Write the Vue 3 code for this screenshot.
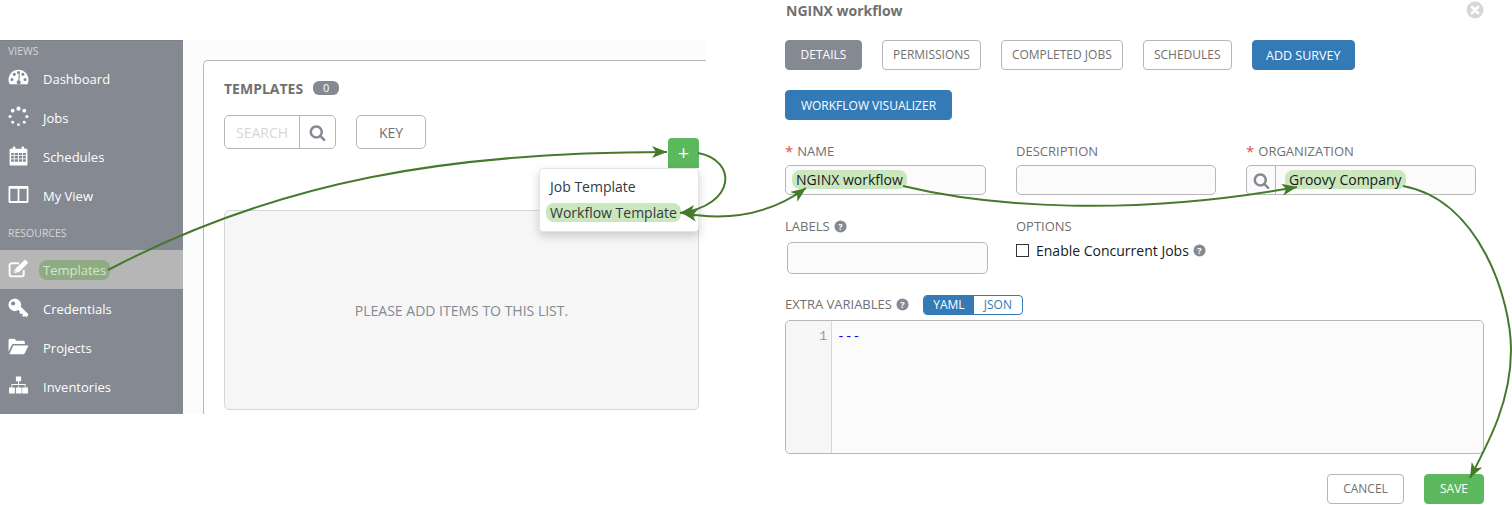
<template>
  <div class="page">
    <div class="left">
      <nav class="sidebar">
        <div class="section first">VIEWS</div>
        <a v-for="item in views" :key="item.label" class="nav-row">
          <svg class="nav-icon" viewBox="0 0 20 20" v-html="item.icon"></svg>
          <span>{{ item.label }}</span>
        </a>
        <div class="section">RESOURCES</div>
        <a v-for="item in resources" :key="item.label" :class="['nav-row', { active: item.active }]">
          <svg class="nav-icon" viewBox="0 0 20 20" v-html="item.icon"></svg>
          <span :class="{ 'mark-dark': item.active }">{{ item.label }}</span>
        </a>
      </nav>

      <main class="main">
        <section class="card">
          <div class="card-title">
            <span>TEMPLATES</span>
            <span class="badge">0</span>
          </div>
          <div class="tools">
            <div class="search">
              <span class="search-text">SEARCH</span>
              <span class="search-btn">
                <svg class="search-icon" viewBox="0 0 1792 1792"><path :d="searchPath" /></svg>
              </span>
            </div>
            <button class="key-btn">KEY</button>
          </div>
          <div class="add-wrap">
            <button class="add-btn">+</button>
            <div class="menu">
              <div class="menu-item">Job Template</div>
              <div class="menu-item"><span class="mark">Workflow Template</span></div>
            </div>
          </div>
          <div class="empty">PLEASE ADD ITEMS TO THIS LIST.</div>
        </section>
      </main>
    </div>

    <section class="form">
      <header class="form-head">
        <span class="form-title">NGINX workflow</span>
        <svg class="close" viewBox="0 0 18 18">
          <circle cx="9" cy="9" r="8.5" fill="#d7d7d7" />
          <path d="M6 6l6 6M12 6l-6 6" stroke="#fff" stroke-width="2.8" stroke-linecap="round" />
        </svg>
      </header>

      <div class="tabs">
        <button class="tab selected">DETAILS</button>
        <button class="tab">PERMISSIONS</button>
        <button class="tab">COMPLETED JOBS</button>
        <button class="tab sched">SCHEDULES</button>
        <button class="tab blue survey">ADD SURVEY</button>
      </div>
      <button class="tab blue visual">WORKFLOW VISUALIZER</button>

      <div class="fields">
        <div class="field">
          <label><i>*</i> NAME</label>
          <div class="input"><span class="mark">NGINX workflow</span></div>
        </div>
        <div class="field">
          <label>DESCRIPTION</label>
          <div class="input"></div>
        </div>
        <div class="field">
          <label><i>*</i> ORGANIZATION</label>
          <div class="input org">
            <span class="org-btn">
              <svg class="search-icon" viewBox="0 0 1792 1792"><path :d="searchPath" /></svg>
            </span>
            <span class="org-value"><span class="mark">Groovy Company</span></span>
          </div>
        </div>
        <div class="field">
          <label>LABELS <svg class="help" viewBox="0 0 14 14"><circle cx="7" cy="7" r="6.5" /><text x="7" y="10.500">?</text></svg></label>
          <div class="input labels"></div>
        </div>
        <div class="field">
          <label>OPTIONS</label>
          <div class="check-row">
            <span class="check"></span>
            <span>Enable Concurrent Jobs</span>
            <svg class="help" viewBox="0 0 14 14"><circle cx="7" cy="7" r="6.5" /><text x="7" y="10.500">?</text></svg>
          </div>
        </div>
      </div>

      <div class="vars-head">
        <label>EXTRA VARIABLES <svg class="help" viewBox="0 0 14 14"><circle cx="7" cy="7" r="6.5" /><text x="7" y="10.500">?</text></svg></label>
        <div class="toggle">
          <span class="on">YAML</span>
          <span>JSON</span>
        </div>
      </div>
      <div class="code">
        <div class="gutter">1</div>
        <div class="code-text">---</div>
      </div>

      <div class="actions">
        <button class="tab cancel">CANCEL</button>
        <button class="tab save">SAVE</button>
      </div>
    </section>

    <!-- annotation arrows lie over everything -->
    <svg class="arrows" width="1512" height="505" viewBox="0 0 1512 505">
      <defs>
        <marker id="head" markerUnits="userSpaceOnUse" markerWidth="20" markerHeight="14" refX="15" refY="6" orient="auto">
          <path d="M0 0L15 6L0 12L4 6Z" fill="#457a2c" />
        </marker>
        <marker id="head-start" markerUnits="userSpaceOnUse" markerWidth="20" markerHeight="14" refX="0" refY="6" orient="auto">
          <path d="M0 6L15 0L11 6L15 12Z" fill="#457a2c" />
        </marker>
      </defs>
      <g fill="none" stroke="#457a2c" stroke-width="2">
        <path d="M108 270C280 180 450 152 667 152" marker-end="url(#head)" />
        <path d="M698 153C737 160 737 205 680 213" marker-end="url(#head)" />
        <path d="M682 213C720 220 765 218 806 188" marker-start="url(#head-start)" marker-end="url(#head)" />
        <path d="M903 186C990 207 1130 217 1297 187" marker-end="url(#head)" />
        <path d="M1403 186C1480 200 1511 300 1511 350C1511 400 1490 440 1470 478" marker-end="url(#head)" />
      </g>
    </svg>
  </div>
</template>

<script setup>
const searchPath = 'M1216 832q0-185-131.500-316.500t-316.500-131.500-316.500 131.500-131.500 316.500 131.500 316.500 316.500 131.500 316.500-131.500 131.500-316.500zm512 832q0 52-38 90t-90 38q-54 0-90-38l-343-342q-179 124-399 124-143 0-273.500-55.500t-225-150-150-225-55.500-273.500 55.500-273.500 150-225 225-150 273.500-55.500 273.500 55.500 225 150 150 225 55.500 273.500q0 220-124 399l343 343q37 37 37 90z'

const dots = [[10, 2.500, 2], [15.500, 4.500, 1.800], [18, 10, 1.500], [15.500, 15.500, 1.400], [10, 17.800, 1.300], [4.500, 15.500, 1.400], [2, 10, 1.500], [4.500, 4.500, 1.800]]

const views = [
  {
    label: 'Dashboard',
    icon: '<path fill="#fff" fill-rule="evenodd" d="M10 2.500C4.500 2.500.5 7 .5 12.300c0 1.600.3 3 1 4.200h17c.7-1.200 1-2.600 1-4.200C19.500 7 15.500 2.500 10 2.500zM3.800 13.400a1.500 1.500 0 1 1 0-3 1.500 1.500 0 0 1 0 3zM6 8.500a1.500 1.500 0 1 1 0-3 1.500 1.500 0 0 1 0 3zM10 6.800a1.500 1.500 0 1 1 0-3 1.500 1.500 0 0 1 0 3zM14.200 8.500a1.500 1.500 0 1 1 0-3 1.500 1.500 0 0 1 0 3zM16.200 13.400a1.500 1.500 0 1 1 0-3 1.500 1.500 0 0 1 0 3z"/><path fill="#848992" d="M11.500 7l-.7 5.600a2 2 0 1 1-2.600 1.900c0-1 .7-1.800 1.600-2l.6-5.500z"/>'
  },
  {
    label: 'Jobs',
    icon: dots.map(([x, y, r]) => `<circle cx="${x}" cy="${y}" r="${r}" fill="#fff"/>`).join('')
  },
  {
    label: 'Schedules',
    icon: '<path fill="#fff" fill-rule="evenodd" d="M2.500 3.500h2V2.800a1.300 1.300 0 0 1 2.600 0v.7h5.800v-.7a1.300 1.300 0 0 1 2.600 0v.7h2c.6 0 1 .4 1 1v14c0 .6-.4 1-1 1h-15c-.6 0-1-.4-1-1v-14c0-.6.4-1 1-1zM3 7.500v2h2.500v-2zm3.300 0v2h3.200v-2zm4 0v2h3.200v-2zm4 0v2H17v-2zM3 10.300v2.500h2.500v-2.500zm3.300 0v2.500h3.200v-2.500zm4 0v2.500h3.200v-2.500zm4 0v2.500H17v-2.500zM3 13.600V16h2.500v-2.400zm3.300 0V16h3.200v-2.400zm4 0V16h3.200v-2.400zm4 0V16H17v-2.400z"/>'
  },
  {
    label: 'My View',
    icon: '<path fill="#fff" fill-rule="evenodd" d="M1.500 2h17c.6 0 1 .4 1 1v14c0 .6-.4 1-1 1h-17c-.6 0-1-.4-1-1V3c0-.6.4-1 1-1zM2.200 4.500v11.800h7V4.500zm8.600 0v11.800h7V4.500z"/>'
  }
]

const resources = [
  {
    label: 'Templates',
    active: true,
    icon: '<path fill="none" stroke="#fff" stroke-width="1.800" d="M15 11.500v4c0 1.200-.9 2-2 2H3.500c-1.100 0-2-.8-2-2V7c0-1.100.9-2 2-2h7"/><path fill="#fff" d="M16.300 1.500l3 3-9 9H7v-3.200zM6 11l-.2 3.200L9 14z"/>'
  },
  {
    label: 'Credentials',
    icon: '<path fill="#fff" fill-rule="evenodd" d="M6.500 1.500a6 6 0 0 1 5.700 7.900l7.300 7.100-1.600 2.800-1.900-1.200-.9 1-1.700-1.400.8-1.100-1-1-1 .8-1.400-1.500.6-.9-1.600-1.500A6 6 0 1 1 6.500 1.500zM4.900 4.200a2 2 0 1 0 0 4 2 2 0 0 0 0-4z"/>'
  },
  {
    label: 'Projects',
    icon: '<path fill="#fff" d="M.5 15V4c0-.8.6-1.500 1.500-1.500h4.300L8 4.500h6.500c.8 0 1.500.6 1.500 1.500v1.500H5.500c-.9 0-1.700.5-2.100 1.200z"/><path fill="#fff" d="M5 9h14.500L16 16.500c-.2.500-.7.800-1.200.8H1.300z"/>'
  },
  {
    label: 'Inventories',
    icon: '<path fill="#fff" d="M7.500 1.500h5v4.500h-2v2.500h6.200v3.500H19v5.500h-5.500V12H16V9.500h-5.500V12H13v5.500H7.500V12H10V9.500H4V12h2.500v5.500H1V12h2.300V8.500h6.200V6h-2z"/>'
  }
]
</script>

<style>
html, body { background: #fff; }
</style>

<style scoped>
.page {
  position: relative;
  display: flex;
  width: 1512px;
  height: 505px;
  overflow: hidden;
  background: #fff;
  color: #707070;
  font-family: "Open Sans", "Liberation Sans", sans-serif;
  font-size: 12px;
}
.left {
  display: flex;
  flex: none;
  width: 706px;
  height: 374px;
  margin-top: 40px;
}
.sidebar {
  flex: none;
  width: 183px;
  padding-bottom: 8px;
  background: #848992;
  color: #fff;
  border-top: 1px solid #7c818a;
  box-sizing: border-box;
}
.section {
  height: 35px;
  padding: 11px 0 0 8px;
  box-sizing: border-box;
  font-size: 10.500px;
  line-height: 14px;
  color: #d7d7d7;
}
.section.first {
  height: 18px;
  padding-top: 3px;
}
.nav-row {
  display: flex;
  align-items: center;
  height: 39px;
  padding-left: 8px;
  font-size: 13px;
}
.nav-row.active { background: #b6b6b6; }
.nav-icon {
  flex: none;
  width: 21px;
  height: 21px;
  margin: -3px 14px 0 0;
}
.mark-dark {
  margin: 0 -4px;
  padding: 1px 4px;
  border-radius: 8px;
  background: #8fab84;
  color: #cfe8c4;
}
.mark {
  margin: 0 -4px;
  padding: 0 4px;
  border-radius: 8px;
  background: #cbe7be;
}
.main {
  flex: 1;
  padding: 20px 0 0 20px;
  background: #fcfcfc;
}
.card {
  height: 354px;
  box-sizing: border-box;
  padding: 19px 7px 0 20px;
  background: #fff;
  border: 1px solid #b7b7b7;
  border-width: 1px 0 0 1px;
  border-top-left-radius: 5px;
}
.card-title {
  display: flex;
  align-items: center;
  gap: 10px;
  height: 16px;
  font-size: 14px;
  font-weight: 700;
  color: #707070;
}
.badge {
  width: 26px;
  height: 14px;
  border-radius: 6px;
  background: #848992;
  color: #fff;
  font-size: 11px;
  font-weight: 400;
  line-height: 14px;
  text-align: center;
}
.tools {
  display: flex;
  gap: 20px;
  margin-top: 19px;
}
.search {
  display: flex;
  width: 112px;
  height: 34px;
  box-sizing: border-box;
  border: 1px solid #b7b7b7;
  border-radius: 5px;
}
.search-text {
  width: 75px;
  padding-left: 11px;
  box-sizing: border-box;
  border-right: 1px solid #b7b7b7;
  color: #d7d7d7;
  font-size: 14px;
  line-height: 34px;
}
.search-btn {
  display: flex;
  flex: 1;
  align-items: center;
  justify-content: center;
}
.search-icon {
  width: 17px;
  height: 17px;
  fill: #848992;
}
button {
  font-family: inherit;
  cursor: pointer;
}
.key-btn {
  width: 70px;
  height: 34px;
  padding: 0;
  border: 1px solid #b7b7b7;
  border-radius: 5px;
  background: #fff;
  color: #707070;
  font-size: 14px;
}
.add-wrap {
  position: relative;
  height: 72px;
  margin-top: -11px;
}
.add-btn {
  position: absolute;
  top: 0;
  right: 0;
  width: 31px;
  height: 30px;
  padding: 0;
  border: 0;
  border-radius: 4px 4px 0 0;
  background: #5cb85c;
  color: #fff;
  font-size: 20px;
  line-height: 30px;
}
.menu {
  position: absolute;
  top: 30px;
  right: 0;
  z-index: 2;
  width: 160px;
  height: 64px;
  box-sizing: border-box;
  padding: 6px 0 0 10px;
  background: #fff;
  border: 1px solid #e4e4e4;
  border-radius: 4px;
  box-shadow: 0 4px 10px rgba(0, 0, 0, .18);
  font-size: 14px;
}
.menu-item {
  height: 26px;
  line-height: 24px;
  color: #2f3a42;
}
.empty {
  display: flex;
  align-items: center;
  justify-content: center;
  height: 200px;
  box-sizing: border-box;
  background: #f6f6f6;
  border: 1px solid #d7d7d7;
  border-radius: 5px;
  color: #848992;
  font-size: 14px;
}
.form {
  flex: none;
  width: 699px;
  margin-left: 79px;
}
.form-head {
  display: flex;
  align-items: center;
  justify-content: space-between;
  height: 20px;
}
.form-title {
  margin-left: 1px;
  font-size: 14px;
  font-weight: 700;
  color: #707070;
}
.close {
  width: 18px;
  height: 18px;
}
.tabs {
  display: flex;
  gap: 20px;
  margin-top: 20px;
}
.tab {
  height: 30px;
  padding: 0 10px 2px;
  box-sizing: border-box;
  border: 1px solid #b7b7b7;
  border-radius: 4px;
  background: #fff;
  color: #707070;
  font-size: 12px;
  white-space: nowrap;
}
.tab.selected {
  width: 77px;
  background: #848992;
  border-color: #848992;
  color: #fff;
}
.tab.blue {
  background: #337ab7;
  border-color: #337ab7;
  color: #fff;
}
.sched { width: 89px; }
.survey {
  width: 103px;
  padding-bottom: 0;
  font-size: 12.500px;
}
.visual {
  display: block;
  width: 167px;
  margin-top: 20px;
  padding-bottom: 0;
}
.fields {
  display: grid;
  grid-template-columns: 201px 200px 230px;
  column-gap: 30px;
  margin-top: 22px;
}
.field { min-width: 0; }
label {
  display: flex;
  align-items: center;
  gap: 4px;
  height: 18px;
  color: #707070;
  font-size: 13px;
  white-space: nowrap;
}
label i {
  color: #d9534f;
  font-size: 15px;
  font-style: normal;
  line-height: 14px;
}
.input {
  height: 30px;
  margin-top: 5px;
  padding-left: 10px;
  box-sizing: border-box;
  border: 1px solid #b7b7b7;
  border-radius: 5px;
  background: #fbfbfb;
  color: #161b1f;
  font-size: 14px;
  line-height: 28px;
  white-space: nowrap;
}
.input.labels {
  width: 201px;
  height: 32px;
  margin: 7px 0 0 2px;
}
.field:nth-child(n + 4) { margin-top: 22px; }
.org {
  display: flex;
  padding-left: 0;
}
.org-btn {
  display: flex;
  align-items: center;
  justify-content: center;
  flex: none;
  width: 28px;
  border-right: 1px solid #b7b7b7;
}
.org-value { padding-left: 13px; }
.check-row {
  display: flex;
  align-items: center;
  height: 20px;
  margin-top: 5px;
  color: #161b1f;
  font-size: 14px;
}
.check {
  width: 13px;
  height: 13px;
  margin-right: 7px;
  box-sizing: border-box;
  border: 1px solid #333;
  background: #fff;
}
.check-row .help { margin-left: 4px; }
.help {
  flex: none;
  width: 13px;
  height: 13px;
}
.help circle { fill: #848992; }
.help text {
  fill: #fff;
  font-family: "Open Sans", sans-serif;
  font-size: 10px;
  font-weight: 700;
  text-anchor: middle;
}
.vars-head {
  display: flex;
  align-items: center;
  gap: 14px;
  margin-top: 21px;
}
.vars-head label { padding-bottom: 2px; }
.toggle {
  display: flex;
  overflow: hidden;
  width: 100px;
  height: 20px;
  box-sizing: border-box;
  border: 1px solid #337ab7;
  border-radius: 4px;
  color: #337ab7;
  font-size: 12px;
  line-height: 18px;
  text-align: center;
}
.toggle span { flex: 1; }
.toggle .on {
  flex: none;
  width: 50px;
  background: #337ab7;
  color: #fff;
}
.code {
  display: flex;
  height: 134px;
  margin-top: 5px;
  box-sizing: border-box;
  border: 1px solid #b7b7b7;
  border-radius: 5px;
  background: #fbfbfb;
  font-family: "Liberation Mono", monospace;
  font-size: 13px;
  line-height: 31px;
}
.gutter {
  width: 46px;
  padding-right: 4px;
  box-sizing: border-box;
  border-right: 1px solid #d7d7d7;
  background: #f6f6f6;
  border-radius: 5px 0 0 5px;
  color: #999;
  text-align: right;
}
.code-text {
  padding-left: 5px;
  color: #0000ff;
}
.actions {
  display: flex;
  justify-content: flex-end;
  gap: 20px;
  margin-top: 20px;
}
.cancel { width: 77px; }
.save {
  width: 60px;
  background: #5cb85c;
  border-color: #5cb85c;
  color: #fff;
}
.arrows {
  position: absolute;
  top: 0;
  left: 0;
  z-index: 5;
  pointer-events: none;
}
</style>
